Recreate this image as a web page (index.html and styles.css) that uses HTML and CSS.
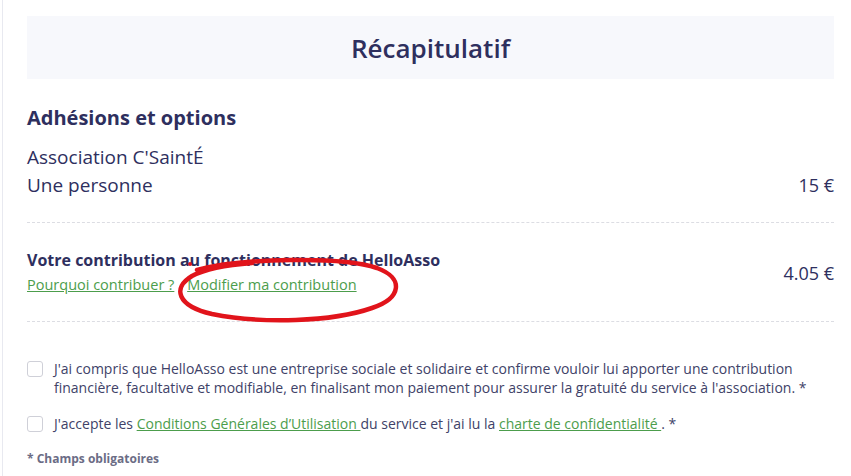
FILE: index.html
```html
<!DOCTYPE html>
<html lang="fr">
<head>
  <meta charset="UTF-8">
  <title>Récapitulatif</title>
  <link rel="stylesheet" href="styles.css">
</head>
<body>
<div class="card">
  <div class="recap-head">
    <h2>Récapitulatif</h2>
  </div>

  <div class="section">
    <h3>Adhésions et options</h3>
    <div class="item">
      <div class="item-name">Association C'SaintÉ</div>
      <div class="row">
        <span>Une personne</span>
        <span class="price">15 €</span>
      </div>
    </div>
  </div>

  <div class="section contrib">
    <div class="contrib-text">
      <div class="contrib-title">Votre contribution au fonctionnement de HelloAsso</div>
      <div class="links">
        <a href="#">Pourquoi contribuer ?</a>
        <a href="#">Modifier ma contribution</a>
      </div>
      <!--annotation au feutre-->
      <svg class="mark" width="240" height="80" viewBox="0 0 240 80">
        <path d="M25 14 C70 2 170 0 205 12 C232 22 230 42 200 52 C160 66 90 68 40 58 C5 50 0 32 20 20 C35 12 55 9 80 7"
              fill="none" stroke="#e1141b" stroke-width="4.5" stroke-linecap="round"/>
        <circle cx="18" cy="8" r="2" fill="#e1141b"/>
      </svg>
    </div>
    <span class="price">4.05 €</span>
  </div>

  <div class="checks">
    <label class="check">
      <span class="box"></span>
      <span>J'ai compris que HelloAsso est une entreprise sociale et solidaire et confirme vouloir lui apporter une contribution financière, facultative et modifiable, en finalisant mon paiement pour assurer la gratuité du service à l'association. *</span>
    </label>
    <label class="check">
      <span class="box"></span>
      <span>J'accepte les <a href="#">Conditions Générales d’Utilisation </a> du service et j'ai lu la <a href="#">charte de confidentialité </a> . *</span>
    </label>
  </div>

  <p class="required">* Champs obligatoires</p>
</div>
</body>
</html>
```

FILE: styles.css
```css
* {
  margin: 0;
  padding: 0;
  box-sizing: border-box;
}

body {
  font-family: "Open Sans", "Liberation Sans", sans-serif;
  color: #2e2f5e;
  background: #fff;
}

a {
  color: #4c9d4c;
  text-decoration: underline;
}

.card {
  width: 849px;
  height: 476px;
  margin-left: 2px;
  border-left: 1px solid #e8e9f0;
  padding: 16px 17px 0 24px;
}

.recap-head {
  background-color: #f7f8fc;
  height: 63px;
  display: flex;
  align-items: center;
  justify-content: center;
}

.recap-head h2 {
  font-size: 26px;
  font-weight: 600;
}

.section {
  padding: 25px 0 23px;
  border-bottom: 1px dashed #dcdde3;
}

.section h3 {
  font-size: 20px;
  font-weight: 700;
  margin-bottom: 12px;
}

.item-name,
.row {
  font-size: 19px;
  line-height: 28px;
}

.row {
  display: flex;
  justify-content: space-between;
}

.price {
  font-size: 18px;
}

.contrib {
  display: flex;
  justify-content: space-between;
  align-items: center;
  padding: 25px 0 23px;
}

.contrib-text {
  position: relative;
}

.contrib-title {
  font-size: 16px;
  font-weight: 700;
  line-height: 24px;
}

.links {
  font-size: 14.5px;
  line-height: 26px;
}

.links a {
  margin-right: 9px;
}

.mark {
  position: absolute;
  left: 145px;
  top: 8px;
  overflow: visible;
}

.checks {
  padding-top: 37px;
}

.check {
  display: flex;
  gap: 11px;
  font-size: 14px;
  line-height: 19px;
  color: #404268;
  margin-bottom: 17px;
}

.check .box {
  flex: none;
  width: 16px;
  height: 16px;
  border: 1px solid #cfd0d8;
  border-radius: 3px;
  margin-top: 2px;
  background: #fff;
}

.required {
  font-size: 12px;
  font-weight: 700;
  color: #6b6c85;
  padding-top: 0;
}
```
